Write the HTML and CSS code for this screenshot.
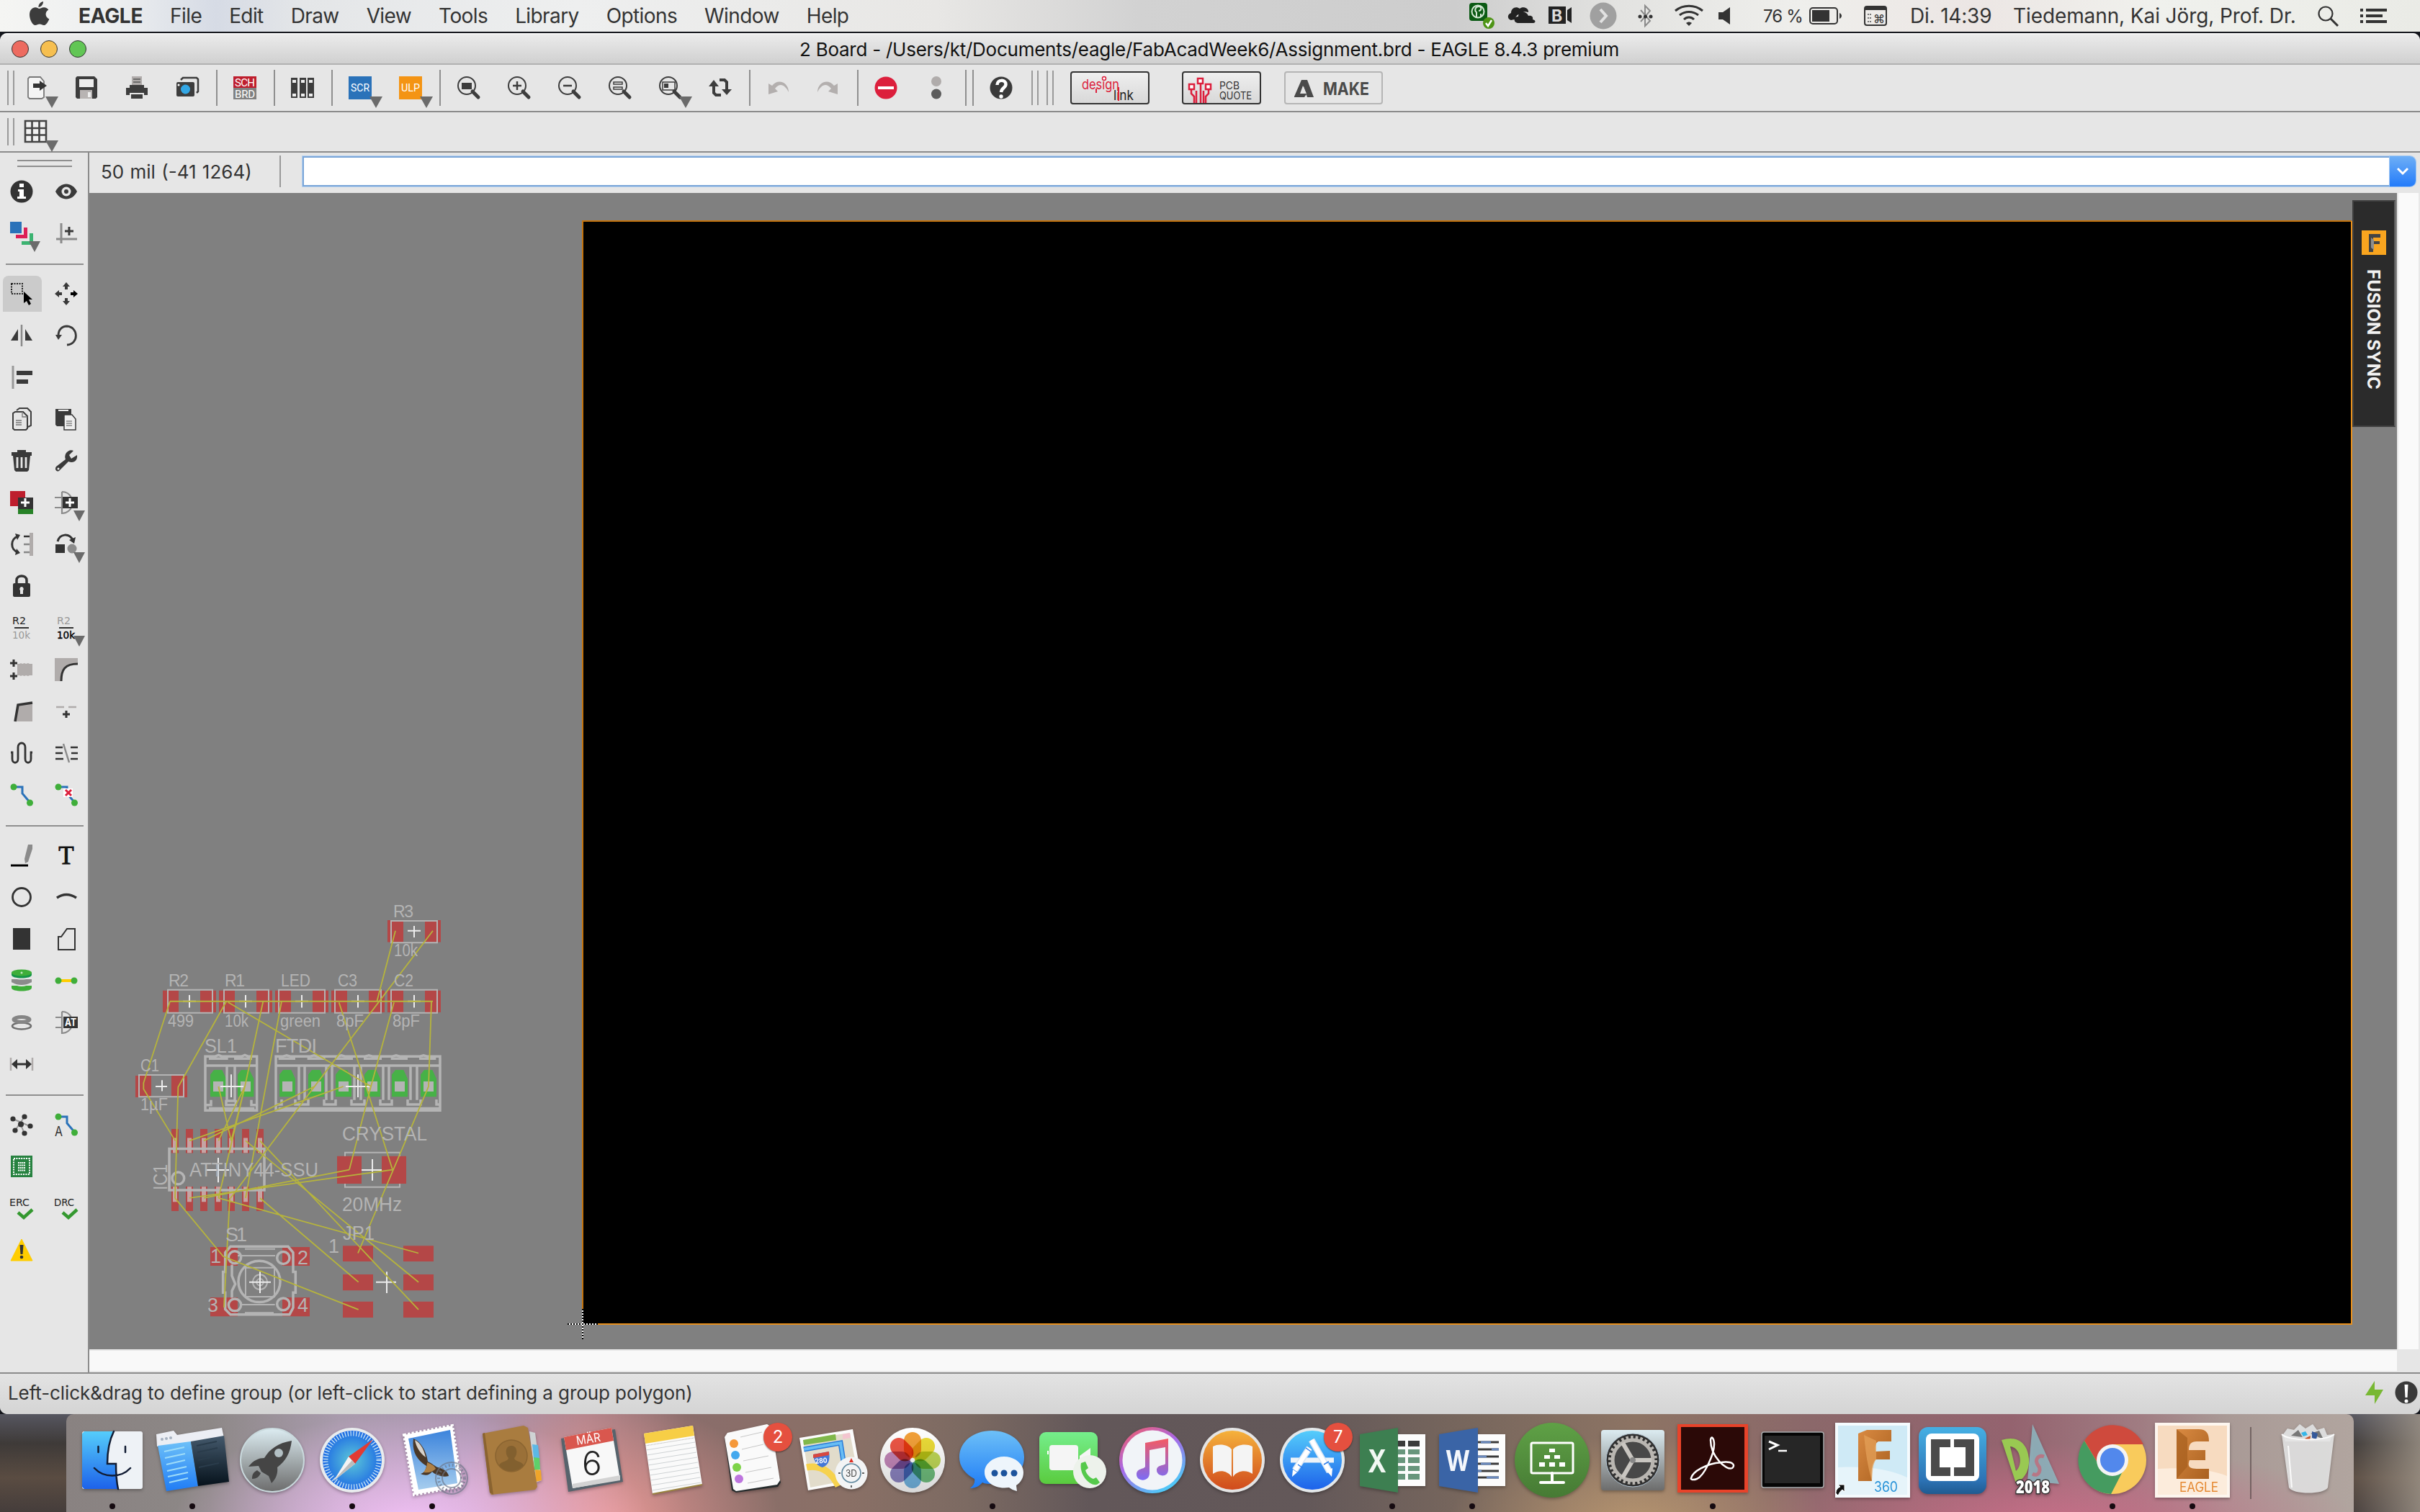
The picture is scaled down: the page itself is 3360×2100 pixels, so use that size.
FILE: index.html
```html
<!DOCTYPE html>
<html lang="de">
<head>
  <meta charset="UTF-8">
  <title>2 Board - EAGLE 8.4.3 premium</title>
  <link rel="stylesheet" href="styles.css">
</head>
<body>

  <!-- System menu bar -->
  <div class="menubar">
    <svg class="apple" width="28" height="34" viewBox="0 0 28 34"><path d="M19 0c.3 4-3 8-6.500 8C12 4.500 15 .8 19 0zM13.500 10c1.500 0 3.500-1.800 6.500-1.800 2.800 0 5 1.400 6.300 3.400-5.500 3.200-4.600 10.600 1 12.800-1.300 3.600-4.300 8.600-7.300 8.600-2.300 0-3.300-1.400-6-1.400S10 33 8 33c-3.800 0-8-8-8-14.500C0 12 4 8.300 8.200 8.300c2.200 0 4 1.700 5.300 1.700z" fill="#3c3c3c"/></svg>
    <div class="menus">
      <b>EAGLE</b><span>File</span><span>Edit</span><span>Draw</span><span>View</span><span>Tools</span><span>Library</span><span>Options</span><span>Window</span><span>Help</span>
    </div>
    <div class="extras">
      <svg width="54" height="44" viewBox="0 0 54 44"><rect x="1" y="4" width="25" height="25" rx="4" fill="#0b5a14"/><circle cx="13" cy="16" r="8.500" fill="none" stroke="#d5e8d5" stroke-width="2"/><path d="M11 24v-7c-3-2-2-8 3-8s4 6 0 6M17 24v-5" fill="none" stroke="#d5e8d5" stroke-width="2"/><circle cx="28" cy="32" r="8" fill="#4e9416"/><path d="M24 32l3 4 5-8" fill="none" stroke="#fff" stroke-width="2.500"/></svg>
      <svg width="57" height="44" viewBox="0 0 57 44"><path d="M5 28c-5-1-6-8 0-10 0-7 7-10 12-6 4-4 13-1 12 5-5-2-9 0-10 3-5-1-8 3-8 7-2 0-3 0-6 1z" fill="#222"/><path d="M14 32c-6-1-6-9 1-9 0-7 11-9 14-1 5-1 7 2 6 5 5 1 4 5 1 5z" fill="#222"/></svg>
      <svg width="57" height="44" viewBox="0 0 57 44"><path d="M0 9h24v24H0zM26 14l6-4v22l-6-4z" fill="#222"/><text x="4" y="30" class="tb" font-size="23" fill="#ddd">B</text></svg>
      <svg width="66" height="44" viewBox="0 0 66 44"><circle cx="19" cy="22" r="18.500" fill="#a0a0a0"/><path d="M15 13l8 9-8 9" fill="none" stroke="#e2e2e2" stroke-width="4"/></svg>
      <svg width="51" height="44" viewBox="0 0 51 44"><path d="M5 14l13 15-7 7V8l7 7L5 30" fill="none" stroke="#8b8b8b" stroke-width="2"/><g fill="#333"><circle cx="4" cy="23" r="2.500"/><circle cx="11.500" cy="23" r="2.500"/><circle cx="19" cy="23" r="2.500"/></g></svg>
      <svg width="62" height="44" viewBox="0 0 62 44"><g fill="none" stroke="#333" stroke-width="3"><path d="M2 15c11-9 27-9 38 0M8 21c8-6 18-6 26 0M14 27c4-4 10-4 14 0"/></g><path d="M17 32c3-2 5-2 8 0l-4 4z" fill="#333"/></svg>
      <svg width="62" height="44" viewBox="0 0 62 44"><path d="M0 17h6l10-7v24l-10-7H0z" fill="#333"/></svg>
      <span class="percent">76 %</span>
      <svg width="76" height="44" viewBox="0 0 76 44"><rect x="1" y="11" width="38" height="22" rx="4" fill="none" stroke="#333" stroke-width="2"/><path d="M4 14h24v16H4z" fill="#333"/><path d="M42 18c4 2 4 6 0 8z" fill="#333"/></svg>
      <svg width="64" height="44" viewBox="0 0 64 44"><rect x="1" y="9" width="30" height="26" rx="3" fill="none" stroke="#333" stroke-width="2"/><path d="M1 9h30v5H1z" fill="#333"/><path d="M5 20h5M5 25h5M5 30h5" stroke="#777" stroke-width="2" stroke-dasharray="2 1"/><text x="13" y="32" font-size="16" class="t" fill="#333">⌘</text></svg>
      <span class="clock">Di. 14:39</span>
      <span class="user">Tiedemann, Kai Jörg, Prof. Dr.</span>
      <svg width="59" height="44" viewBox="0 0 59 44"><circle cx="11" cy="19" r="9.500" fill="none" stroke="#333" stroke-width="2.200"/><path d="M18 26l10 10" stroke="#333" stroke-width="3"/></svg>
      <svg width="83" height="44" viewBox="0 0 83 44"><path d="M0 14h4M8 14h29M0 22h4M8 22h23M0 30h4M8 30h29" stroke="#333" stroke-width="4"/></svg>
    </div>
  </div>

  <div class="window">
    <div class="titlebar">
      <div class="lights"><i class="red"></i><i class="yellow"></i><i class="green"></i></div>
      <span class="title">2 Board - /Users/kt/Documents/eagle/FabAcadWeek6/Assignment.brd - EAGLE 8.4.3 premium</span>
    </div>

    <!-- Action toolbar -->
    <div class="toolbar main">
      <div class="handle"></div>
      <div class="btn drop"><svg class="ic" viewBox="0 0 32 32"><path d="M7 1h15l5 6v22l-3 2H7l-2-2V3z" fill="#f4f4f4" stroke="#777" stroke-width="1.800"/><path d="M12 10h9V6l10 7-10 7v-4h-9z" fill="#333"/></svg></div>
      <div class="btn"><svg class="ic" viewBox="0 0 32 32"><path d="M3 0h24l4 4v25l-2 2H3l-2-2V2z" fill="#3d3d3d"/><path d="M6 4h20v11H6z" fill="#eee"/><path d="M7 19h17v12H7z" fill="#b8b4b3"/><path d="M18 22h4v7h-4z" fill="#eee"/></svg></div>
      <div class="btn"><svg class="ic" viewBox="0 0 32 32"><path d="M9 0h14v12H9z" fill="#b0acab"/><path d="M11 4h10M11 8h10" stroke="#555" stroke-width="1.500"/><path d="M6 12h20v4h5v10h-5v-3H6v3H1V16h5z" fill="#3d3d3d"/><path d="M8 25h16v6H8z" fill="#3d3d3d"/></svg></div>
      <div class="btn"><svg class="ic" viewBox="0 0 32 32"><path d="M7 5l3-3h19l2 2v17l-2 2" fill="none" stroke="#3d3d3d" stroke-width="2.500"/><rect x="1" y="8" width="25" height="20" rx="2" fill="#3d3d3d"/><circle cx="13.500" cy="18" r="6.500" fill="#33a7e5"/><circle cx="4" cy="12" r="1.500" fill="#fff"/></svg></div>
      <div class="sep"></div>
      <div class="btn"><svg class="ic" viewBox="0 0 32 32"><path d="M0 0h32v16H0z" fill="#be1e2d"/><path d="M0 16h32v16H0z" fill="#808080"/><text x="16" y="14" class="pix" textLength="28">SCH</text><text x="16" y="30" class="pix" textLength="28">BRD</text></svg></div>
      <div class="sep"></div>
      <div class="btn"><svg class="ic" viewBox="0 0 32 32"><path d="M0 2h9v28H0zM12 2h9v28h-9zM23 2h9v28h-9z" fill="#3d3d3d"/><path d="M2 5h5v4H2zM14 5h5v4h-5zM25 5h5v4h-5zM2 24h5v4H2zM14 24h5v4h-5zM25 24h5v4h-5z" fill="#eee"/></svg></div>
      <div class="sep"></div>
      <div class="btn drop"><svg class="ic" viewBox="0 0 32 32"><path d="M0 0h32v32H0z" fill="#2a72b9"/><text x="16" y="21" class="pix" textLength="26" lengthAdjust="spacingAndGlyphs">SCR</text></svg></div>
      <div class="btn drop"><svg class="ic" viewBox="0 0 32 32"><path d="M0 0h32v32H0z" fill="#f49414"/><text x="16" y="21" class="pix" textLength="26" lengthAdjust="spacingAndGlyphs">ULP</text></svg></div>
      <div class="sep"></div>
      <div class="btn"><svg class="ic" viewBox="0 0 32 32"><circle cx="14" cy="13" r="12" class="ln"/><path d="M22 21l8 8" class="hd"/><path d="M7 9h14v9H7z" fill="#3d3d3d"/></svg></div>
      <div class="btn"><svg class="ic" viewBox="0 0 32 32"><circle cx="14" cy="13" r="12" class="ln"/><path d="M22 21l8 8" class="hd"/><path d="M8 13h12M14 7v12" stroke="#3d3d3d" stroke-width="2.500"/></svg></div>
      <div class="btn"><svg class="ic" viewBox="0 0 32 32"><circle cx="14" cy="13" r="12" class="ln"/><path d="M22 21l8 8" class="hd"/><path d="M8 13h12" stroke="#3d3d3d" stroke-width="2.500"/></svg></div>
      <div class="btn"><svg class="ic" viewBox="0 0 32 32"><circle cx="14" cy="13" r="12" class="ln"/><path d="M22 21l8 8" class="hd"/><path d="M8 8h12v3H8zM8 15h12v3H8z" fill="none" stroke="#3d3d3d" stroke-width="1.500"/></svg></div>
      <div class="btn drop"><svg class="ic" viewBox="0 0 32 32"><circle cx="14" cy="13" r="12" class="ln"/><path d="M22 21l8 8" class="hd"/><path d="M6 8h17v11H6z" fill="none" stroke="#3d3d3d" stroke-width="1.500"/><path d="M8 10h6v6H8z" fill="#3d3d3d"/></svg></div>
      <div class="btn"><svg class="ic" viewBox="0 0 32 32"><path d="M7 12v11l3 3h7M25 19V8l-3-3h-7" fill="none" stroke="#3d3d3d" stroke-width="4"/><path d="M0 14l7-9 7 9zM18 18h14l-7 8z" fill="#3d3d3d"/></svg></div>
      <div class="sep"></div>
      <div class="btn"><svg class="ic" viewBox="0 0 32 32"><path d="M31 22C31 9 17 2 8 13l-5-3v15l13-4-4-4c7-9 14-5 19 5z" fill="#b3afae"/></svg></div>
      <div class="btn"><svg class="ic" viewBox="0 0 32 32"><path d="M1 22C1 9 15 2 24 13l5-3v15l-13-4 4-4C13 8 6 12 1 22z" fill="#b3afae"/></svg></div>
      <div class="sep"></div>
      <div class="btn"><svg class="ic" viewBox="0 0 32 32"><circle cx="16" cy="16" r="15.500" fill="#dc1f3c"/><path d="M5 14h22v4H5z" fill="#fff"/></svg></div>
      <div class="btn"><svg class="ic" viewBox="0 0 32 32"><circle cx="16" cy="7" r="7" fill="#b0acab"/><circle cx="16" cy="24.500" r="7" fill="#5c5c5c"/></svg></div>
      <div class="sep"></div><div class="sep"></div>
      <div class="btn"><svg class="ic" viewBox="0 0 32 32"><circle cx="16" cy="16" r="15.500" fill="#3a3a3a"/><path d="M10.500 12c0-8 12-8 12-1 0 5-6 5-6.500 11" fill="none" stroke="#fff" stroke-width="4.500"/><circle cx="16" cy="28" r="2.700" fill="#fff"/></svg></div>
      <div class="handle four"></div><div class="handle four"></div>
      <div class="promo"><svg width="106" height="44" viewBox="0 0 106 44"><text x="14" y="23" class="t" font-size="19" fill="#dc1f3c" textLength="52" lengthAdjust="spacingAndGlyphs">design</text><text x="58" y="38" class="t" font-size="19" fill="#222" textLength="28" lengthAdjust="spacingAndGlyphs">link</text><path d="M45 5v5M34 22v6M65 20v19" stroke="#dc1f3c" stroke-width="2"/><circle cx="45" cy="8" r="2.500" fill="#fff" stroke="#dc1f3c" stroke-width="1.500"/></svg></div>
      <div class="promo pcb"><svg width="106" height="44" viewBox="0 0 106 44"><path d="M11 21v8l4 4v10M24 16v27M35 21v8l-4 4v10M18 25v18M28 25v18" fill="none" stroke="#dc1f3c" stroke-width="2.500"/><path d="M8 16h7v7H8zM20 8h7v7h-7zM31 16h7v7h-7z" fill="#fff" stroke="#dc1f3c" stroke-width="2.500"/><text x="50" y="23" class="t" font-size="14" fill="#333" textLength="28" lengthAdjust="spacingAndGlyphs">PCB</text><text x="50" y="37" class="t" font-size="14" fill="#333" textLength="45" lengthAdjust="spacingAndGlyphs">QUOTE</text></svg></div>
      <div class="promo make"><svg width="133" height="44" viewBox="0 0 133 44"><path d="M12 33L22 10h8l9 24h-9l-5-15-4 9h9l-4 6-14 0z" fill="#4a4a4a"/><path d="M24 18l5 11h-9z" fill="#e6e6e6"/><text x="52" y="31" class="tb" font-size="24" fill="#4a4a4a" textLength="64" lengthAdjust="spacingAndGlyphs">MAKE</text></svg></div>
    </div>

    <!-- Parameter toolbar -->
    <div class="toolbar params">
      <div class="handle"></div>
      <div class="btn drop"><svg class="ic" viewBox="0 0 32 32"><path d="M1 1h29v29H1zM1 11h29M1 20.500h29M10.500 1v29M20.500 1v29" fill="#f2f2f2" stroke="#444" stroke-width="2.600"/></svg></div>
    </div>

    <div class="work">
      <!-- Tool palette -->
      <div class="palette">
        <div class="grip"></div>
        <div class="tools">
          <div><svg class="ic" viewBox="0 0 32 32"><circle cx="16" cy="16" r="15.500" fill="#333"/><path d="M13 5h6v5h-6zM11 13h8v10h3v3H10v-3h3v-7h-2z" fill="#fff"/></svg></div>
          <div><svg class="ic" viewBox="0 0 32 32"><path d="M1 16C8 2 24 2 31 16 24 30 8 30 1 16z" fill="#3a3a3a"/><circle cx="16" cy="16" r="6.500" fill="#e6e6e6"/><circle cx="16" cy="16" r="3" fill="#3a3a3a"/></svg></div>
          <div class="drop"><svg class="ic" viewBox="0 0 32 32"><path d="M0 0h16v16H0z" fill="#2a72b9"/><path d="M19 8h5v15H8v-5h11z" fill="#dc1f56"/><path d="M27 16h5v16H16v-5h11z" fill="#3cb371"/></svg></div>
          <div><svg class="ic" viewBox="0 0 32 32"><path d="M9 2v28M2 24h29" stroke="#8b8b8b" stroke-width="3"/><path d="M14 13h12M20 7v12" stroke="#3a3a3a" stroke-width="3"/></svg></div>
        </div>
        <hr>
        <div class="tools">
          <div class="active"><svg class="ic" viewBox="0 0 32 32"><path d="M2 2h15v14H2z" fill="none" stroke="#222" stroke-width="2" stroke-dasharray="2 1.500"/><path d="M19 13v16l4-3 3 6 3-2-3-6h5z" fill="#000"/></svg></div>
          <div><svg class="ic" viewBox="0 0 32 32"><g fill="#3a3a3a"><path d="M16 0l5 6h-3v4h-4V6h-3zM16 32l5-6h-3v-4h-4v4h-3zM0 16l6-5v3h4v4H6v3z"/><path d="M32 16l-6-5v3h-4v4h4v3z" fill="#000"/></g></svg></div>
          <div><svg class="ic" viewBox="0 0 32 32"><path d="M11 7v16H1zM21 7v16h10z" fill="#3a3a3a"/><path d="M16 1v30" stroke="#8b8b8b" stroke-width="2.500"/></svg></div>
          <div><svg class="ic" viewBox="0 0 32 32"><path d="M5 16C5 8 10 3 17 3c16 1 17 25 0 26" fill="none" stroke="#3a3a3a" stroke-width="2.800"/><path d="M1 15h9l-5 7z" fill="#3a3a3a"/></svg></div>
          <div><svg class="ic" viewBox="0 0 32 32"><path d="M4 0v32" stroke="#999" stroke-width="3"/><path d="M9 7h22v6H9zM9 19h16v6H9z" fill="#3a3a3a"/></svg></div>
          <div></div>
          <div><svg class="ic" viewBox="0 0 32 32"><path d="M9 4l4-3h11l5 5v19l-4 2" class="ln"/><path d="M7 6h11l6 6v17l-2 2H6l-2-2V8z" class="ln"/><path d="M8 18h8M8 21h8M8 24h8M17 6v7h7" fill="none" stroke="#777" stroke-width="1.300"/></svg></div>
          <div><svg class="ic" viewBox="0 0 32 32"><path d="M1 2h22v24H3l-2-2z" fill="#3a3a3a"/><path d="M5 4h14" stroke="#eee" stroke-width="2"/><path d="M14 10h10l5 6v15H13V11z" fill="#eee" stroke="#3a3a3a" stroke-width="1.500"/><path d="M16 19h8M16 22h8M16 25h8" stroke="#888" stroke-width="1.300"/></svg></div>
          <div><svg class="ic" viewBox="0 0 32 32"><path d="M2 4h8V1h12v3h8v5h-2l-2 20-2 2H8l-2-2L4 9H2z" fill="#3a3a3a"/><path d="M10 11v15M16 11v15M22 11v15" stroke="#e6e6e6" stroke-width="2.800"/></svg></div>
          <div><svg class="ic" viewBox="0 0 32 32"><path d="M26 2l-6 6 3 5 8-5c1 8-5 12-12 9L6 30c-3 2-7-2-4-6L15 14c-3-7 4-15 11-12z" fill="#3a3a3a"/><circle cx="5" cy="27" r="1.500" fill="#eee"/></svg></div>
          <div><svg class="ic" viewBox="0 0 32 32"><path d="M0 0h21v21H0z" fill="#be1e2d"/><path d="M11 9h21v16H11z" fill="#333"/><path d="M11 25h21v7H11z" fill="#278227"/><path d="M15 16h12M21 10v12" stroke="#fff" stroke-width="3"/></svg></div>
          <div class="drop"><svg class="ic" viewBox="0 0 32 32"><path d="M0 9h10M0 23h10M10 1v30c8 0 12-6 13-8M10 1c7 0 11 4 13 8" fill="none" stroke="#8b8b8b" stroke-width="2.200"/><path d="M11 8h21v16H11z" fill="#333"/><path d="M15 16h12M21 10v12" stroke="#fff" stroke-width="3"/></svg></div>
          <div><svg class="ic" viewBox="0 0 32 32"><path d="M11 5C0 8 0 24 11 27" fill="none" stroke="#333" stroke-width="3"/><path d="M7 1l7 2-4 7zM7 31l7-3-5-6z" fill="#333"/><path d="M27 0h5v32h-5z" fill="#b0acab"/><path d="M19 5h8" stroke="#333" stroke-width="2.500"/><path d="M19 16h8M19 27h8" stroke="#888" stroke-width="2.500"/></svg></div>
          <div class="drop"><svg class="ic" viewBox="0 0 32 32"><path d="M4 12C7 1 20 0 25 10" fill="none" stroke="#333" stroke-width="3"/><path d="M20 10l9-4-2 9z" fill="#333"/><path d="M1 16h13v12H1z" fill="#333"/><circle cx="24" cy="22" r="6.500" fill="#8b8b8b"/></svg></div>
          <div><svg class="ic" viewBox="0 0 32 32"><path d="M9 14V8c0-8 14-8 14 0v6" fill="none" stroke="#333" stroke-width="3.500"/><rect x="4" y="12" width="24" height="19" rx="2" fill="#333"/><path d="M16 17a3 3 0 0 1 2 5v5h-4v-5a3 3 0 0 1 2-5z" fill="#e6e6e6"/></svg></div>
          <div></div>
          <div><svg class="ic" viewBox="0 0 32 32"><text x="3" y="11" class="nv" textLength="19" lengthAdjust="spacingAndGlyphs">R2</text><path d="M6 16h20" stroke="#333" stroke-width="2"/><text x="3" y="31" class="nv dim" textLength="25" lengthAdjust="spacingAndGlyphs">10k</text></svg></div>
          <div class="drop"><svg class="ic" viewBox="0 0 32 32"><text x="3" y="11" class="nv dim" textLength="19" lengthAdjust="spacingAndGlyphs">R2</text><path d="M6 16h20" stroke="#333" stroke-width="2"/><text x="3" y="31" class="nv dark" textLength="25" lengthAdjust="spacingAndGlyphs">10k</text></svg></div>
          <div><svg class="ic" viewBox="0 0 32 32"><path d="M0 7h10M5 2v10M0 25h10M5 20v10" stroke="#333" stroke-width="3"/><path d="M10 8h3l2-1 2 1 3-1 2 1 3-1 2 1h4v16h-4l-2 1-3-1-2 1-3-1-2 1-2-1h-3z" fill="#b0acab"/></svg></div>
          <div><svg class="ic" viewBox="0 0 32 32"><path d="M0 0h32v8C14 8 10 16 10 32H0z" fill="#b0acab"/><path d="M32 8C14 8 9 16 9 32" fill="none" stroke="#333" stroke-width="3"/></svg></div>
          <div><svg class="ic" viewBox="0 0 32 32"><path d="M7 30L11 7l20-3v26z" fill="#b0acab"/><path d="M7 30L11 7l20-3" fill="none" stroke="#333" stroke-width="3.500"/></svg></div>
          <div><svg class="ic" viewBox="0 0 32 32"><path d="M2 10h11M19 10h11" stroke="#b0acab" stroke-width="2.500"/><path d="M11 20h10M16 15v10" stroke="#333" stroke-width="3"/></svg></div>
          <div><svg class="ic" viewBox="0 0 32 32"><path d="M1 15h2v9c0 7 8 7 8 0V8c0-8 10-8 10 0v16c0 7 8 7 8 0v-9h2" fill="none" stroke="#333" stroke-width="2.800"/></svg></div>
          <div><svg class="ic" viewBox="0 0 32 32"><path d="M1 8h10M1 16h10M1 24h11M22 8h10M23 16h9M22 24h10" stroke="#333" stroke-width="2.500"/><path d="M12 3l8 26" stroke="#8b8b8b" stroke-width="2.500"/></svg></div>
          <div><svg class="ic" viewBox="0 0 32 32"><path d="M5 5h12v9l11 13" fill="none" stroke="#2a72b9" stroke-width="3"/><circle cx="5" cy="5" r="4.500" fill="#3fae3a"/><circle cx="27.500" cy="27" r="4.500" fill="#3fae3a"/></svg></div>
          <div><svg class="ic" viewBox="0 0 32 32"><path d="M5 5h12v9l11 13" fill="none" stroke="#2a72b9" stroke-width="3"/><circle cx="5" cy="5" r="4.500" fill="#3fae3a"/><circle cx="27.500" cy="27" r="4.500" fill="#3fae3a"/><path d="M12 7h13v12H12z" fill="#fff"/><path d="M15 9l8 8M23 9l-8 8" stroke="#dc1f3c" stroke-width="3"/></svg></div>
        </div>
        <hr>
        <div class="tools">
          <div><svg class="ic" viewBox="0 0 32 32"><path d="M1 30h24" stroke="#000" stroke-width="3"/><path d="M25 1h6v6l-6 18-4 2-1-6z" fill="#8b8b8b"/></svg></div>
          <div><svg class="ic" viewBox="0 0 32 32"><text x="16" y="28" class="serif">T</text></svg></div>
          <div><svg class="ic" viewBox="0 0 32 32"><circle cx="16" cy="16" r="12.500" fill="none" stroke="#333" stroke-width="2.800"/></svg></div>
          <div><svg class="ic" viewBox="0 0 32 32"><path d="M3 17q13-9 27 0" fill="none" stroke="#333" stroke-width="3.500"/></svg></div>
          <div><svg class="ic" viewBox="0 0 32 32"><path d="M4 1h24v30H4z" fill="#333"/></svg></div>
          <div><svg class="ic" viewBox="0 0 32 32"><path d="M5 31V13h4l8-11h11v29z" fill="none" stroke="#333" stroke-width="2"/></svg></div>
          <div><svg class="ic" viewBox="0 0 32 32"><path d="M2 23v3c0 6 28 6 28 0v-3z" fill="#3fae3a"/><path d="M2 14v4c0 6 28 6 28 0v-4z" fill="#8b8b8b"/><path d="M2 6v4c0 6 28 6 28 0V6z" fill="#e6e6e6"/><path d="M2 5v3c0 6 28 6 28 0V5z" fill="#149447"/><ellipse cx="16" cy="5" rx="14" ry="4.500" fill="#3fae3a"/><path d="M2 19q14 8 28 0" stroke="#e6e6e6" stroke-width="2" fill="none"/><circle cx="16" cy="5" r="1.500" fill="#bfe6bf"/></svg></div>
          <div><svg class="ic" viewBox="0 0 32 32"><path d="M5 16h22" stroke="#ffcd00" stroke-width="4"/><circle cx="5" cy="16" r="4.500" fill="#3fae3a"/><circle cx="27" cy="16" r="4.500" fill="#3fae3a"/></svg></div>
          <div><svg class="ic" viewBox="0 0 32 32"><ellipse cx="16" cy="21" rx="13" ry="4.500" fill="none" stroke="#6e6e6e" stroke-width="2.500"/><ellipse cx="16" cy="12" rx="11" ry="3.500" fill="#e6e6e6" stroke="#858585" stroke-width="5"/></svg></div>
          <div><svg class="ic" viewBox="0 0 32 32"><path d="M1 9h9M1 23h9M10 1v30c8 0 12-6 13-8M10 1c7 0 11 4 13 8" fill="none" stroke="#8b8b8b" stroke-width="2.200"/><path d="M12 8h20v16H12z" fill="#333"/><text x="14" y="21" class="tb" font-size="14" fill="#fff" textLength="16" lengthAdjust="spacingAndGlyphs">AT</text></svg></div>
          <div><svg class="ic" viewBox="0 0 32 32"><path d="M1 7v18M31 7v18" stroke="#b0acab" stroke-width="2.500"/><path d="M6 16h20" stroke="#333" stroke-width="3"/><path d="M2 16l8-7v14zM30 16l-8-7v14z" fill="#333"/></svg></div>
          <div></div>
        </div>
        <hr>
        <div class="tools">
          <div><svg class="ic" viewBox="0 0 32 32"><path d="M4 8l23 10M7 24L20 5M15 16l5 13" stroke="#999" stroke-width="2"/><g fill="#333"><circle cx="4" cy="8" r="3.600"/><circle cx="20" cy="5" r="3.600"/><circle cx="15" cy="15.500" r="4"/><circle cx="28" cy="18" r="3.600"/><circle cx="7" cy="24" r="3.600"/><circle cx="20" cy="28" r="3.600"/></g></svg></div>
          <div><svg class="ic" viewBox="0 0 32 32"><path d="M5 5h12v9l11 13" fill="none" stroke="#2a72b9" stroke-width="3"/><circle cx="5" cy="5" r="4.500" fill="#3fae3a"/><circle cx="27.500" cy="27" r="4.500" fill="#3fae3a"/><text x="0" y="32" class="t" font-size="18" fill="#333" textLength="11" lengthAdjust="spacingAndGlyphs">A</text></svg></div>
          <div><svg class="ic" viewBox="0 0 32 32"><path d="M1 1h30v30H1z" fill="#278240"/><path d="M5 5h22v22H5z" fill="none" stroke="#fff" stroke-width="2" stroke-dasharray="2 1.400"/><path d="M11 11h10M11 14.500h10M11 18h10M11 21.500h10" stroke="#fff" stroke-width="2" stroke-dasharray="2 .7"/></svg></div>
          <div></div>
          <div><svg class="ic" viewBox="0 0 32 32"><text x="-1" y="13" class="nv" textLength="28" lengthAdjust="spacingAndGlyphs">ERC</text><path d="M11 22l8 7 12-11" fill="none" stroke="#34982f" stroke-width="4.500"/></svg></div>
          <div><svg class="ic" viewBox="0 0 32 32"><text x="-1" y="13" class="nv" textLength="28" lengthAdjust="spacingAndGlyphs">DRC</text><path d="M11 22l8 7 12-11" fill="none" stroke="#34982f" stroke-width="4.500"/></svg></div>
          <div><svg class="ic" viewBox="0 0 32 32"><path d="M16 1l15 30H1z" fill="#ffcd00" stroke="#ffcd00"/><path d="M13.500 9h5l-1 13h-3z" fill="#333"/><circle cx="16" cy="26" r="2.300" fill="#333"/></svg></div>
        </div>
      </div>

      <div class="editor">
        <div class="command">
          <span class="coords">50 mil (-41 1264)</span>
          <i class="divider"></i>
          <div class="input"></div>
          <div class="combo"><svg width="16" height="12" viewBox="0 0 16 12"><path d="M1 2l7 7 7-7" fill="none" stroke="#fff" stroke-width="3"/></svg></div>
        </div>
        <div class="view">
          <svg class="board" width="3204" height="1606" viewBox="124 268 3204 1606">
            <path d="M810 308h2454v1530H810z" fill="#000"/>
            <path d="M809 1838V307H3265" fill="none" stroke="#c4730c" stroke-width="2"/>
            <path d="M809 1839H3265V307" fill="none" stroke="#e8901c" stroke-width="2"/>
            <path d="M788 1839h42M809 1818v42" stroke="#fff" stroke-width="2"/>
            <path d="M788 1839h42M809 1818v42" stroke="#000" stroke-width="2" stroke-dasharray="2 2"/>

            <g transform="translate(170 1240) scale(.33333 .38265)">
              <!-- pads -->
              <g class="pad">
                <path d="M1104 99h66v80h-66zM1260 99h66v80h-66z"/>
                <path d="M168 355h66v79h-66zM324 355h66v79h-66zM402 355h66v79h-66zM558 355h66v79h-66zM636 355h66v79h-66zM792 355h66v79h-66zM870 355h66v79h-66zM1026 355h66v79h-66zM1104 355h66v79h-66zM1260 355h66v79h-66z"/>
                <path d="M54 664h66v78H54zM204 664h66v78h-66z"/>
                <path d="M204 857h30v88h-30zM264 857h30v88h-30zM324 857h30v88h-30zM384 857h30v88h-30zM438 857h30v88h-30zM498 857h30v88h-30zM558 857h30v88h-30z"/>
                <path d="M204 1066h30v89h-30zM264 1066h30v89h-30zM324 1066h30v89h-30zM384 1066h30v89h-30zM438 1066h30v89h-30zM498 1066h30v89h-30zM558 1066h30v89h-30z"/>
                <path d="M894 956h102v100H894zM1080 956h102v100h-102z"/>
                <path d="M366 1286h114v68H366zM666 1286h114v68H666zM366 1469h114v68H366zM666 1469h114v68H666z"/>
                <path d="M918 1281h126v57H918zM1170 1281h126v57h-126zM918 1385h126v58H918zM1170 1385h126v58h-126zM918 1484h126v58H918zM1170 1484h126v58h-126z"/>
              </g>
              <!-- through holes -->
              <path class="hole" d="M366 740v-80l15-17h34l17 32v65zM480 740v-80l15-17h34l18 32v65zM654 740v-80l15-17h34l17 32v65zM774 740v-80l15-17h34l17 32v65zM888 740v-80l15-17h34l17 32v65zM1008 740v-80l15-17h34l17 32v65zM1122 740v-80l15-17h34l17 32v65zM1242 740v-80l15-17h34l17 32v65z"/>
              <path class="drill" d="M378 685h42v36h-42zM492 685h42v36h-42zM666 685h42v36h-42zM786 685h42v36h-42zM900 685h42v36h-42zM1020 685h42v36h-42zM1134 685h42v36h-42zM1254 685h42v36h-42z"/>
              <path class="drill lead" d="M210 890h18v54h-18zM270 890h18v54h-18zM330 890h18v54h-18zM390 890h18v54h-18zM444 890h18v54h-18zM504 890h18v54h-18zM564 890h18v54h-18zM210 1067h18v55h-18zM270 1067h18v55h-18zM330 1067h18v55h-18zM390 1067h18v55h-18zM444 1067h18v55h-18zM504 1067h18v55h-18zM564 1067h18v55h-18z"/>
              <!-- outlines -->
              <g class="silk thin">
                <path d="M1119 102h192v79h-192zM189 352h186v84H189zM423 352h186v84H423zM651 352h192v84H651zM885 352h192v84H885zM1119 352h192v84h-192zM69 661h186v79H69z"/>
                <path d="M927 956v-13h228v13M927 1056v12h228v-12"/>
                <path d="M513 1361h120v105H513zM510 1293h126M480 1317h156M495 1495h140M510 1524h120"/>
                <ellipse cx="573" cy="1413" rx="30" ry="27"/><ellipse cx="573" cy="1413" rx="14" ry="12"/>
              </g>
              <g class="silk">
                <path d="M345 594h40l15-5 15 5h80l15-5 15 5h35v196H345zM345 627h212M360 602h80M465 602h75M435 630v125h33V630"/>
                <path d="M345 770h24v-18M432 752v18h40v-18M537 752v18h24M360 783h190"/>
                <path d="M639 594h30l15-4 15 4h84l15-4 15 4h84l15-4 15 4h84l15-4 15 4h84l15-4 15 4h84l15-4 15 4h54v196H639zM639 627h684"/>
                <path d="M735 627v125M759 627v125M849 627v125M873 627v125M966 627v125M993 627v125M1086 627v125M1110 627v125M1200 627v125M1227 627v125M650 602h70M770 602h75M885 602h75M1005 602h75M1118 602h70M1236 602h70"/>
                <path d="M645 768h18v-18M720 750v18h54v-18M840 750v18h48v-18M954 750v18h54v-18M1074 750v18h48v-18M1188 750v18h54v-18M1308 750v18h12M650 783h670"/>
                <path d="M195 929h396v150H195z"/>
                <ellipse cx="232" cy="1036" rx="25" ry="22"/>
                <path d="M450 1284h240l21 22v70h10v75h-10v55l-15 25H450l-22-20v-60h-9v-75h9v-70z"/>
                <path d="M456 1350v40l14 30-14 25v25"/>
                <ellipse cx="570" cy="1411" rx="87" ry="75"/>
                <ellipse cx="468" cy="1323" rx="26" ry="22"/><ellipse cx="670" cy="1325" rx="26" ry="22"/><ellipse cx="468" cy="1496" rx="26" ry="22"/><ellipse cx="670" cy="1493" rx="26" ry="22"/>
              </g>
              <!-- origins -->
              <path class="origin" d="M1188 138h54M1215 120v42M252 394h54M279 371v46M486 394h54M513 371v46M720 394h54M747 371v46M954 394h54M981 371v46M1188 394h54M1215 371v46M138 703h48M165 680v40M408 703h96M453 659v83M930 703h102M981 659v83M348 1006h96M399 962v89M996 1006h84M1041 967v78M528 1413h90M573 1375v78M1056 1413h84M1101 1375v78"/>
              <!-- airwires -->
              <path class="wire" d="M198 394H1293M198 394L88 690V712L220 900M433 394L232 705 219 1108M440 397L1035 703M586 394L510 703M663 394L573 815 513 1108M902 398L1030 745 1125 1005M1060 394L1137 138M1293 138L800 703M800 703L339 900M920 703L279 900M800 703L450 1108M1131 398L1035 703 945 1005M1287 394L1275 703 981 1308M400 703L453 900M510 703L400 900M510 703L453 900M510 703L400 1108M279 1108L1125 1005M339 1108L945 1005M400 1108L1233 1308M573 1108L983 1413M219 1108L420 1320 983 1513M447 1108L423 1505M513 900L1233 1413M573 900L1233 1513"/>
            </g>

            <!-- names and values -->
            <g class="label">
              <text x="546" y="1274" textLength="28">R3</text><text x="547" y="1328" textLength="33" lengthAdjust="spacingAndGlyphs">10k</text>
              <text x="234" y="1370" textLength="28">R2</text><text x="312" y="1370" textLength="28">R1</text><text x="390" y="1370" textLength="41" lengthAdjust="spacingAndGlyphs">LED</text><text x="469" y="1370" textLength="27" lengthAdjust="spacingAndGlyphs">C3</text><text x="547" y="1370" textLength="27" lengthAdjust="spacingAndGlyphs">C2</text>
              <text x="233" y="1426" textLength="36" lengthAdjust="spacingAndGlyphs">499</text><text x="312" y="1426" textLength="33" lengthAdjust="spacingAndGlyphs">10k</text><text x="389" y="1426" textLength="56" lengthAdjust="spacingAndGlyphs">green</text><text x="467" y="1426" textLength="38" lengthAdjust="spacingAndGlyphs">8pF</text><text x="545" y="1426" textLength="38" lengthAdjust="spacingAndGlyphs">8pF</text>
              <text x="195" y="1488" textLength="26" lengthAdjust="spacingAndGlyphs">C1</text><text x="195" y="1542" textLength="38" lengthAdjust="spacingAndGlyphs">1µF</text>
              <g class="big">
                <text x="284" y="1462" textLength="45" lengthAdjust="spacingAndGlyphs">SL1</text><text x="382" y="1462" textLength="58">FTDI</text>
                <text x="475" y="1584" textLength="118" lengthAdjust="spacingAndGlyphs">CRYSTAL</text><text x="475" y="1682" textLength="83" lengthAdjust="spacingAndGlyphs">20MHz</text>
                <text x="263" y="1634" textLength="179" lengthAdjust="spacingAndGlyphs">ATTINY44-SSU</text>
                <text x="313" y="1724" textLength="30">S1</text><text x="476" y="1722" textLength="44" lengthAdjust="spacingAndGlyphs">JP1</text><text x="456" y="1740">1</text>
                <text x="292" y="1754">1</text><text x="413" y="1756">2</text><text x="288" y="1822">3</text><text x="413" y="1822">4</text>
                <text transform="translate(232 1653) rotate(-90)" textLength="36" lengthAdjust="spacingAndGlyphs">IC1</text>
              </g>
            </g>
          </svg>
          <div class="fusion">
            <svg width="34" height="34" viewBox="0 0 34 34"><path d="M0 0h34v34H0z" fill="#f9a51f"/><path d="M10 5h16v5H16v5h9v4h-9v11h-6z" fill="#444"/><path d="M13 10l4 3v14l-4-3z" fill="#8e8e8e"/></svg>
            <span>FUSION SYNC</span>
          </div>
          <div class="vscroll"></div>
        </div>
        <div class="hscroll"></div>
      </div>
    </div>

    <div class="status">
      <span>Left-click&amp;drag to define group (or left-click to start defining a group polygon)</span>
      <div class="status-icons">
        <svg width="26" height="32" viewBox="0 0 26 32"><path d="M13 0v12h12L13 32V20H0z" fill="#78b833"/></svg>
        <svg width="32" height="32" viewBox="0 0 32 32"><circle cx="16" cy="16" r="15.500" fill="#3a3a3a"/><path d="M13.500 5h5l-1 18h-3z" fill="#fff"/><circle cx="16" cy="28" r="2.500" fill="#fff"/></svg>
      </div>
    </div>
  </div>

  <!-- Dock -->
  <div class="desk">
    <svg width="0" height="0" class="defs"><defs>
      <linearGradient id="sky" x2="0" y2="1"><stop stop-color="#55cdfb"/><stop offset="1" stop-color="#1d62ea"/></linearGradient>
      <linearGradient id="msg" x2="0" y2="1"><stop stop-color="#6dc0f8"/><stop offset="1" stop-color="#1f7cf5"/></linearGradient>
      <linearGradient id="silver" x2="0" y2="1"><stop stop-color="#dcecf1"/><stop offset="1" stop-color="#6c6c6c"/></linearGradient>
      <linearGradient id="white" x2="0" y2="1"><stop stop-color="#fff"/><stop offset="1" stop-color="#d8d8d8"/></linearGradient>
      <linearGradient id="night" x2="0" y2="1"><stop stop-color="#44596c"/><stop offset="1" stop-color="#06121b"/></linearGradient>
      <linearGradient id="lime" x2="0" y2="1"><stop stop-color="#75ee8c"/><stop offset="1" stop-color="#5acb3e"/></linearGradient>
      <linearGradient id="amber" x2="0" y2="1"><stop stop-color="#f5b23c"/><stop offset="1" stop-color="#d04a1c"/></linearGradient>
      <linearGradient id="tune" x2=".6" y2="1"><stop stop-color="#fa5c5c"/><stop offset=".5" stop-color="#a868e8"/><stop offset="1" stop-color="#4fc8f8"/></linearGradient>
      <linearGradient id="note" x2="0" y2="1"><stop stop-color="#f45a62"/><stop offset="1" stop-color="#7c6cf4"/></linearGradient>
      <linearGradient id="leaf" x2="0" y2="1"><stop stop-color="#5fa146"/><stop offset="1" stop-color="#467a34"/></linearGradient>
      <linearGradient id="copper" x2="1" y2="1"><stop stop-color="#d98a42"/><stop offset="1" stop-color="#a9601f"/></linearGradient>
      <linearGradient id="brick" x2="0" y2="1"><stop stop-color="#46b0e4"/><stop offset=".8" stop-color="#2c72b4"/><stop offset="1" stop-color="#1f5a90"/></linearGradient>
      <linearGradient id="air" x2="0" y2="1"><stop stop-color="#3c84dc"/><stop offset="1" stop-color="#a6cdee"/></linearGradient>
      <radialGradient id="sea"><stop stop-color="#5cc8d8"/><stop offset="1" stop-color="#1f6ce4"/></radialGradient>
    </defs></svg>
    <div class="dock">
      <div class="app on"><svg viewBox="0 0 104 104"><rect x="10" y="12" width="84" height="80" rx="3" fill="#eef2f6"/><path d="M13 12h41c-6 12-9 28-9 45h12c0 14 1 26 3 35H13l-3-3V15z" fill="url(#sky)"/><path d="M54 12c-6 12-9 28-9 45h12c0 14 1 26 3 35M27 63c13 14 37 14 50 0M32.500 33v8M70 33v8" fill="none" stroke="#111c33" stroke-width="2.500" stroke-linecap="round"/></svg></div>
      <div class="app on"><svg viewBox="0 0 104 104"><path d="M2 16l24-5 5 6 62-10 3 14-93 12z" fill="#eceef4"/><path d="M4 32l46-6 10 62-44 7z" fill="url(#msg)"/><path d="M50 26l46-8 7 64-43 6z" fill="url(#night)"/><path d="M13 40l28-6M14 49l28-6M16 58l26-6M17 67l27-6M18 75l28-6M20 83l26-6" stroke="#9edcf8" stroke-width="2"/><path d="M58 32l28-6M59 41l28-6M60 52l28-6M61 62l28-6" stroke="#2a3c4b" stroke-width="2"/><g fill="#a5b0bf"><circle cx="10" cy="23" r="2"/><circle cx="16" cy="22" r="2"/><circle cx="22" cy="21" r="2"/></g></svg></div>
      <div class="app"><svg viewBox="0 0 104 104"><circle cx="52" cy="52" r="44" fill="url(#silver)" stroke="#c9d9dd" stroke-width="2"/><path d="M79 25c-19 3-31 12-38 24-8 0-15 3-22 12l14-1 4 8 10 6 4 10c7-7 9-15 8-22 12-9 18-20 20-37zM31 66c-6 3-7 7-7 12 6 0 10-3 12-8z" fill="#454545"/><circle cx="61" cy="42" r="6" fill="#b3c0c4"/></svg></div>
      <div class="app on"><svg viewBox="0 0 104 104"><circle cx="52" cy="52" r="45" fill="#e9ecee"/><circle cx="52" cy="52" r="41" fill="url(#sea)"/><circle cx="52" cy="52" r="37" fill="none" stroke="#d5ecf6" stroke-width="7" stroke-dasharray="1.200 2.700"/><path d="M81 23L47 47l9 10z" fill="#e23b32"/><path d="M47 47l9 10-30 24z" fill="#f3f3f3"/><path d="M56 57L26 81l26-29z" fill="#bcbcbc"/></svg></div>
      <div class="app on"><svg viewBox="0 0 104 104"><path d="M13 17L80 4l13 84-66 12z" fill="#fff" stroke="#fff" stroke-width="4" stroke-dasharray="3 2.500"/><path d="M19 22l58-12 10 74-54 9z" fill="url(#air)"/><path d="M26 22c10 4 18 17 20 32 6 2 10 7 14 8 8 2 14 6 15 12-8 2-18-1-23-6-4 5-9 6-16 3 6-2 7-6 8-11C28 50 24 37 26 22z" fill="#4a3828"/><path d="M28 24c9 5 13 15 15 24-8-6-13-14-15-24z" fill="#d8d2ca"/><path d="M45 55c5 2 10 4 12 9-4 4-9 6-17 5 3-4 5-8 5-14z" fill="#b08145"/><g fill="none" stroke="#6c7688" opacity=".65"><circle cx="79" cy="77" r="22" stroke-width="2"/><circle cx="79" cy="77" r="13" stroke-width="2"/><circle cx="79" cy="77" r="18" stroke-width="4" stroke-dasharray="2 3"/></g></svg></div>
      <div class="app"><svg viewBox="0 0 104 104"><path d="M76 12l8 2 9 66-8 3z" fill="#cfd3d4"/><path d="M80 30l8 1 2 18-8 1z" fill="#5cb8e6"/><path d="M82 48l8 1 1 16-8 1z" fill="#5fd06a"/><path d="M84 65l8 1 1 14-8 2z" fill="#f0a52a"/><path d="M11 15l57-11 6 3 13 82-3 4-61 7-2-3z" fill="#a97c3f"/><path d="M11 15l3-1 12 86-5-3z" fill="#8a6330"/><circle cx="51" cy="46" r="22" fill="#9a7038" stroke="#8a6431" stroke-width="1.500"/><path d="M51 32c9 0 9 12 4 17 0 5 10 4 13 10-9 11-26 11-34 0 3-6 13-5 13-10-5-5-5-17 4-17z" fill="#82602f"/></svg></div>
      <div class="app"><svg viewBox="0 0 104 104"><path d="M8 22l75-13 11 73-76 14z" fill="#57636c"/><path d="M12 20l66-13 12 72-66 12z" fill="#f8f8f8"/><path d="M12 20l66-13 3 18-66 13z" fill="#d9574e"/><path d="M24 85l66-12v7l-66 11z" fill="#d3d3d3"/><text transform="translate(30 31) rotate(-9)" class="t" font-size="17" fill="#fff" textLength="34" lengthAdjust="spacingAndGlyphs">MÄR</text><text x="37" y="73" class="light" font-size="46" fill="#222">6</text></svg></div>
      <div class="app"><svg viewBox="0 0 104 104"><path d="M12 15L80 4l13 82-69 13z" fill="#fafafa"/><path d="M12 15L80 4l2 14-68 11z" fill="#f7ce46"/><path d="M14 32l68-11" stroke="#aaa" stroke-width="1" stroke-dasharray="1 1"/><path d="M15 38l68-11M16 45l68-11M17 52l68-11M18 59l68-11M19 66l68-11M20 73l68-11M21 80l68-11M22 87l68-11M23 94l68-11" stroke="#cfd3d5" stroke-width="1"/><path d="M24 99l69-13" stroke="#9a8340" stroke-width="2"/></svg></div>
      <div class="app"><svg viewBox="0 0 104 104"><path d="M13 20l60-13 18 76-4 6-58 8-6-3z" fill="#252b2c"/><path d="M17 14l55-12 6 4 12 74-4 6-57 9-4-3-12-72z" fill="#fafafa"/><path d="M35 20l30-7M37 37l30-7M39 53l35-7M42 69l36-7M45 84l36-7" stroke="#c7c7c7" stroke-width="1"/><circle cx="26" cy="29" r="6" fill="#f5983a"/><circle cx="28" cy="45" r="6" fill="#43a8ee"/><circle cx="30" cy="62" r="6" fill="#7ed349"/><circle cx="33" cy="78" r="6" fill="#bd75de"/></svg><em class="badge">2</em></div>
      <div class="app"><svg viewBox="0 0 104 104"><path d="M6 21L80 9l13 72-75 13z" fill="#fbfbfb"/><path d="M11 24l65-10 12 63-67 13z" fill="#e2dccb"/><path d="M11 24l45-8 1 8-45 7z" fill="#80b84a"/><path d="M66 16l10-2 1 7-11 2z" fill="#f3c5cf"/><path d="M12 37l51-9 6 38" fill="none" stroke="#2a7cd8" stroke-width="7"/><path d="M12 37l51-9 6 38" fill="none" stroke="#68bdf4" stroke-width="4"/><path d="M16 62c20-4 34 6 44 26" fill="none" stroke="#f6d24e" stroke-width="9"/><path d="M25 44l22-4c2 12-1 19-9 22-8-2-12-9-13-18z" fill="#4377d8"/><path d="M25 44l22-4v5l-22 4z" fill="#d8473f"/><text transform="translate(28 57) rotate(-5)" class="tb" font-size="10" fill="#fff" textLength="17" lengthAdjust="spacingAndGlyphs">280</text><circle cx="78" cy="70" r="22.500" fill="#f3f4f5"/><circle cx="78" cy="70" r="13" fill="none" stroke="#60889e" stroke-width="1.700"/><path d="M78 49l3 6h-6z" fill="#dd3124"/><path d="M60 70h3M93 70h3M78 87v3" stroke="#333" stroke-width="1.500"/><text x="70" y="75" class="t" font-size="13" fill="#444" textLength="16" lengthAdjust="spacingAndGlyphs">3D</text></svg></div>
      <div class="app"><svg viewBox="0 0 104 104"><circle cx="52" cy="52" r="45" fill="url(#white)"/><g class="petals"><rect x="40" y="13" width="24" height="36" rx="12" fill="#f3a13a"/><rect x="40" y="13" width="24" height="36" rx="12" fill="#ecdc38" transform="rotate(45 52 52)"/><rect x="40" y="13" width="24" height="36" rx="12" fill="#bfd756" transform="rotate(90 52 52)"/><rect x="40" y="13" width="24" height="36" rx="12" fill="#6fbd7c" transform="rotate(135 52 52)"/><rect x="40" y="13" width="24" height="36" rx="12" fill="#72b4e0" transform="rotate(180 52 52)"/><rect x="40" y="13" width="24" height="36" rx="12" fill="#8b83c0" transform="rotate(225 52 52)"/><rect x="40" y="13" width="24" height="36" rx="12" fill="#c286b8" transform="rotate(270 52 52)"/><rect x="40" y="13" width="24" height="36" rx="12" fill="#ee5646" transform="rotate(315 52 52)"/></g></svg></div>
      <div class="app on"><svg viewBox="0 0 104 104"><path d="M51 11c25 0 45 15 45 37S76 85 51 85c-5 0-9 0-13-2-5 6-11 8-17 8 5-4 7-8 6-13C14 71 6 61 6 48c0-22 20-37 45-37z" fill="url(#msg)"/><path d="M68 47c15 0 27 10 27 22 0 8-4 14-10 18l1 8c-5-1-8-3-11-5-20 3-34-8-34-21 0-12 12-22 27-22z" fill="#eef5fb"/><g fill="#1c539c"><circle cx="55" cy="70" r="4.500"/><circle cx="68" cy="70" r="4.500"/><circle cx="82" cy="70" r="4.500"/></g></svg></div>
      <div class="app"><svg viewBox="0 0 104 104"><rect x="6" y="13" width="81" height="72" rx="9" fill="url(#lime)"/><rect x="20" y="31" width="40" height="35" rx="4" fill="#f5f5f5"/><path d="M62 46l15-11v24l-15 2z" fill="#f5f5f5"/><path d="M18 39v5" stroke="#fff" stroke-width="2"/><circle cx="76" cy="68" r="23" fill="#edf2eb"/><path d="M64 56l6-2 4 9-4 3c2 6 6 10 11 12l4-2 5 7-4 3c-12 2-25-16-22-30z" fill="#55c94b"/></svg></div>
      <div class="app"><svg viewBox="0 0 104 104"><circle cx="52" cy="52" r="46" fill="url(#tune)"/><circle cx="52" cy="52" r="41.500" fill="#f1f4f8"/><path d="M42 28l32-6v43c0 12-16 10-16 1 0-8 10-6 12-9V34l-22 4v32c0 13-18 12-18 2 0-9 10-7 12-11z" fill="url(#note)"/></svg></div>
      <div class="app"><svg viewBox="0 0 104 104"><circle cx="52" cy="52" r="45" fill="#e4e4e4"/><circle cx="52" cy="52" r="41" fill="url(#amber)"/><path d="M25 33c9-5 22-2 26 4v38c-6-9-18-10-26-4zM53 37c4-6 18-9 27-4v38c-8-6-21-5-27 4z" fill="#f4f4f4"/></svg></div>
      <div class="app"><svg viewBox="0 0 104 104"><circle cx="52" cy="52" r="45" fill="#e4e8ea"/><circle cx="52" cy="52" r="41" fill="url(#sky)"/><path d="M22 52h60" stroke="#eef3f8" stroke-width="7"/><path d="M51 24l25 44M48 35L28 66" stroke="#d9e6f4" stroke-width="9"/><path d="M51 24l25 44M48 35L28 66" stroke="#fff" stroke-width="6"/><path d="M72 67l8-4-1 12zM25 65l6 4-7 6z" fill="#fff"/><path d="M68 58l7-4M32 58l7 5M43 35l7 5" stroke="#2c7cec" stroke-width="1.500"/></svg><em class="badge">7</em></div>
      <div class="app on"><svg viewBox="0 0 104 104"><path d="M58 16h40v72H58z" fill="#fcfcfc"/><path d="M60 25h10v8H60zM74 25h16v8H74z" fill="#3b3b3b"/><path d="M60 37h10v7H60zM74 37h16v7H74zM60 48h10v8H60zM74 48h16v8H74zM60 60h10v7H60zM74 60h16v7H74zM60 71h10v8H60zM74 71h16v8H74z" fill="#68967c"/><path d="M7 16L60 7v90L7 88z" fill="#3d7f51"/><text x="18" y="69" class="tb" font-size="44" fill="#f2f8f3" textLength="26" lengthAdjust="spacingAndGlyphs">X</text></svg></div>
      <div class="app on"><svg viewBox="0 0 104 104"><path d="M58 16h40v72H58z" fill="#fcfcfc"/><path d="M60 27h29M60 37h29M60 47h29M60 57h29M60 67h29M60 76h29" stroke="#3b3b3b" stroke-width="3"/><path d="M64 27h14M79 37h10M60 47h12M64 57h14M60 67h5M72 76h17" stroke="#6a89bd" stroke-width="3"/><path d="M6 16L60 7v90L6 88z" fill="#3a64a6"/><text x="15" y="67" class="tb" font-size="40" fill="#f4f7fc" textLength="34" lengthAdjust="spacingAndGlyphs">W</text></svg></div>
      <div class="app"><svg viewBox="0 0 104 104"><circle cx="52" cy="52" r="52" fill="url(#leaf)"/><rect x="23" y="28" width="58" height="42" rx="2" fill="none" stroke="#fff" stroke-width="3"/><path d="M52 70v13M36 83h32" stroke="#fff" stroke-width="4" stroke-linecap="round"/><path d="M48 36h8v5h-8zM41 45h8v5h-8zM55 45h8v5h-8zM34 55h8v6h-8zM48 55h8v6h-8zM62 55h8v6h-8z" fill="#fff"/></svg></div>
      <div class="app"><svg viewBox="0 0 104 104"><rect x="8" y="10" width="88" height="84" rx="4" fill="url(#silver)"/><circle cx="52" cy="52" r="37" fill="#303030" stroke="#b3c3d0"/><circle cx="52" cy="52" r="28" fill="#484848" stroke="#b9b6b1" stroke-width="5"/><circle cx="52" cy="52" r="31" fill="none" stroke="#b9b6b1" stroke-width="6" stroke-dasharray="3.500 3"/><path d="M52 52h26M52 52L38 28M52 52L38 76" stroke="#c9c6c1" stroke-width="6"/><circle cx="52" cy="52" r="4" fill="#888"/></svg></div>
      <div class="app on"><svg viewBox="0 0 104 104"><path d="M3 2h98v95H3z" fill="#e8432a"/><path d="M8 6h88v87H8z" fill="#2b0907"/><path d="M22 77c2-9 20-20 42-22 16-2 20 4 15 8-8 4-30-16-30-39 1-7 5-2 5 6 0 14-14 44-24 48-5 2-9 1-8-1z" fill="none" stroke="#fff" stroke-width="2.500"/></svg></div>
      <div class="app"><svg viewBox="0 0 104 104"><rect x="9" y="13" width="86" height="77" rx="3" fill="#050505" stroke="#a8acae" stroke-width="1.500"/><path d="M13 18h77v66H13z" fill="#262626"/><path d="M19 26l12 5-12 6" fill="none" stroke="#fff" stroke-width="3"/><path d="M32 39h12" stroke="#fff" stroke-width="2.500"/></svg></div>
      <div class="app"><svg viewBox="0 0 104 104"><path d="M0 0h104v104H0z" fill="#f5fbfe"/><path d="M4 4h96v96H4z" fill="#cfeaf6"/><path d="M4 62c40-2 70 2 96 14v24H4z" fill="#e6f4fa"/><path d="M32 15l12-5h34v16H60c-4 2-5 8-4 14l20-1v12H56c-6 8-6 18-5 30H32z" fill="url(#copper)"/><path d="M40 17c2 20 4 40 11 64 1-14 1-24 6-30V25z" fill="#e6a25a" opacity=".7"/><text x="54" y="96" class="t" font-size="20" fill="#2c95d9" textLength="33" lengthAdjust="spacingAndGlyphs">360</text><path d="M1 98c0-5 3-8 6-9l-3-3h9v10l-3-3c-2 1-4 4-6 8z" fill="#111" stroke="#fff"/></svg></div>
      <div class="app"><svg viewBox="0 0 104 104"><rect x="5" y="6" width="94" height="93" rx="13" fill="url(#brick)"/><rect x="15" y="15" width="74" height="66" rx="8" fill="#fff"/><path d="M22 23h27v11H34v28h15v12H22zM82 23H54v11h16v28H54v12h28z" fill="#4a4a4a"/></svg></div>
      <div class="app"><svg viewBox="0 0 104 104"><path fill-rule="evenodd" d="M9 24c22-7 36 4 38 26 1 18-7 28-18 34zM21 33l8 34c10-8 7-33-8-34z" fill="#99c952"/><path d="M52 2l37 83-44-4z" fill="#8fb4be" opacity=".9"/><path d="M68 47c-8-3-13 4-9 11 6 7 2 18-7 13" fill="none" stroke="#b77785" stroke-width="5"/><text x="29" y="98" class="cond" font-size="24" fill="#fff" textLength="47" lengthAdjust="spacingAndGlyphs">2018</text></svg></div>
      <div class="app on"><svg viewBox="0 0 104 104"><circle cx="52" cy="52" r="47" fill="#f9cb5c"/><path d="M13 25a47 47 0 0 1 82 5H52L32 57z" fill="#cf4a3d"/><path d="M13 25a47 47 0 0 0 37 74l18-35-36-7z" fill="#459b60"/><circle cx="52" cy="52" r="22" fill="#f4f4f4"/><circle cx="52" cy="52" r="17" fill="#5288ec"/></svg></div>
      <div class="app on"><svg viewBox="0 0 104 104"><path d="M0 0h104v104H0z" fill="#fdf6ef"/><path d="M4 4h96v96H4z" fill="#f7dbc0"/><path d="M4 64c40-2 70 0 96 10v26H4z" fill="#fcecdc"/><path d="M30 9h30c12 0 15 6 15 17H58c-8 0-11 4-11 12h23v14H48c-3 8-1 12 10 12h17v14H30z" fill="url(#copper)"/><path d="M30 9l15 12v40L30 78z" fill="#a55e1e" opacity=".7"/><text x="34" y="96" class="t" font-size="18" fill="#e58a33" textLength="54" lengthAdjust="spacingAndGlyphs">EAGLE</text></svg></div>
      <i class="dock-sep"></i>
      <div class="app trash"><svg viewBox="0 0 104 104"><path d="M17 16l6-8 9 2 8-8 8 6 10-6 6 8 10-3 4 10 8-1-4 10H20z" fill="#dcdcdc"/><path d="M28 18l10-8 6 10zM55 15l12-4 6 12zM40 10l6 3" fill="#777"/><path d="M42 14l6-2 3 5-6 2z" fill="#35b6e8"/><path d="M57 12l8 3-2 8-6-2z" fill="#35599a"/><path d="M47 22l8-4-1 8z" fill="#c8552b"/><path d="M15 16c10 10 62 10 73 0l-9 74c-5 10-49 10-54 0z" fill="#e4e4e4" opacity=".9"/><path d="M15 16c10 10 62 10 73 0M24 32l5 58" stroke="#fafafa" stroke-width="2" fill="none"/></svg></div>
    </div>
  </div>

</body>
</html>
```
FILE: styles.css
```css
* {
  box-sizing: border-box;
}

body {
  margin: 0;
  width: 3360px;
  height: 2100px;
  overflow: hidden;
  background: #14161c;
  font-family: Inter, "Liberation Sans", sans-serif;
  color: #333;
}

svg {
  display: block;
  flex: none;
  overflow: visible;
}

/* Text inside drawings */
.t { font-family: Inter, sans-serif; }
.tb { font-family: Inter, sans-serif; font-weight: 700; }
.light { font-family: Inter, sans-serif; font-weight: 300; }
.cond {
  font-family: "Open Sans", sans-serif;
  font-weight: 800;
  stroke: #333;
  stroke-width: 3px;
  paint-order: stroke;
}
.pix {
  font-family: Roboto, sans-serif;
  font-size: 15px;
  fill: #fff;
  text-anchor: middle;
}
.nv {
  font-family: "DejaVu Sans", sans-serif;
  font-size: 14px;
  fill: #222;
}
.nv.dim { fill: #999; }
.nv.dark { fill: #000; stroke: #000; stroke-width: .4px; }
.serif {
  font-family: "Liberation Serif", serif;
  font-size: 35px;
  text-anchor: middle;
  fill: #111;
  stroke: #111;
  stroke-width: .9px;
}
.ln { fill: none; stroke: #3d3d3d; stroke-width: 2; }
.hd { stroke: #3d3d3d; stroke-width: 5; stroke-linecap: round; }

/* Menu bar */
.menubar {
  height: 44px;
  display: flex;
  align-items: center;
  background: linear-gradient(90deg, #f5f5f3, #edeff0 160px, #d6dbe5 300px, #e4e6e8 420px, #eeefef 800px, #e8e7e5 1300px, #d2d2d2 1580px, #cdcdcd 2020px, #e3e3e1 2250px, #efefec 2500px, #ece6e4 2740px, #f0f1ed 3000px, #eaebe6);
  font-size: 28px;
}

.apple {
  margin: -6px 0 0 41px;
}

.menus {
  display: flex;
  gap: 38px;
  margin-left: 40px;
  letter-spacing: -0.6px;
}

.menus b { letter-spacing: -0.3px; }

.extras {
  display: flex;
  align-items: center;
  margin-left: auto;
  width: 1321px;
}

.extras span { flex: none; white-space: nowrap; }
.percent { width: 64px; font-size: 24px; letter-spacing: -0.9px; }
.clock { width: 143px; letter-spacing: -0.2px; }
.user { width: 423px; letter-spacing: -0.1px; }

/* Window */
.window {
  margin-top: 2px;
  height: 1918px;
  display: flex;
  flex-direction: column;
  background: #e6e6e6;
  border-radius: 10px;
  overflow: hidden;
}

.titlebar {
  height: 44px;
  display: flex;
  align-items: center;
  background: linear-gradient(#ebebeb, #d0d0d0);
  border-top: 2px solid #f6f6f6;
  border-bottom: 2px solid #b1b1b1;
}

.lights {
  display: flex;
  gap: 16px;
  margin-left: 16px;
  width: 1094px;
}

.lights i {
  width: 24px;
  height: 24px;
  border-radius: 50%;
  border: 1px solid;
}

.red { background: #ed6b60; border-color: #d9534b; }
.yellow { background: #f6bf50; border-color: #dda03a; }
.green { background: #62c655; border-color: #51a73e; }

.title {
  font-size: 26px;
  letter-spacing: -0.25px;
  color: #111;
  white-space: nowrap;
}

.toolbar {
  display: flex;
  align-items: center;
  border-bottom: 2px solid #8b8b8b;
}

.main { height: 66px; }
.params { height: 56px; }

.handle {
  width: 10px;
  height: 48px;
  margin-left: 10px;
  margin-right: -5px;
  border-left: 2px solid #9a9a9a;
}

.handle::after {
  content: "";
  display: block;
  width: 2px;
  height: 48px;
  margin-left: 6px;
  background: #9a9a9a;
}

.params .handle,
.params .handle::after { height: 38px; }

.handle.four {
  margin: 0 10px 0 7px;
}

.handle.four + .handle.four {
  margin: 0 23px 0 1px;
}

.btn {
  width: 70px;
  height: 50px;
  display: grid;
  place-items: center;
}

.ic {
  width: 32px;
  height: 32px;
}

/* little arrow of a button that opens a menu */
.drop { position: relative; }
.drop::after {
  content: "";
  position: absolute;
  left: calc(50% + 13px);
  top: calc(50% + 12px);
  border: 9px solid transparent;
  border-top: 16px solid #6b6b6b;
  border-bottom: 0;
}

.sep {
  width: 10px;
  height: 50px;
  background: linear-gradient(90deg, transparent 5px, #8f8f8f 5px, #8f8f8f 7px, transparent 7px);
}

.promo {
  height: 46px;
  border: 2px solid #333;
  border-radius: 4px;
  background: linear-gradient(#efefef, #d8d8d8);
  margin-right: 45px;
  overflow: hidden;
}

.pcb { margin-right: 32px; }
.make { border-color: #b5b5b5; background: #e6e6e6; }

.work {
  flex: 1;
  display: flex;
  min-height: 0;
  border-bottom: 2px solid #8b8b8b;
}

/* Palette */
.palette {
  width: 124px;
  border-right: 2px solid #8b8b8b;
  padding-top: 10px;
}

.grip {
  width: 76px;
  height: 10px;
  margin: 0 0 5px 24px;
  border-top: 2px solid #8f8f8f;
  border-bottom: 2px solid #8f8f8f;
}

.tools {
  display: grid;
  grid-template-columns: 60px 64px;
  grid-auto-rows: 58px;
}

.tools > div {
  display: grid;
  place-items: center;
}

.tools .drop::after {
  left: calc(50% + 10px);
  top: calc(50% + 11px);
  border-width: 15px 8px 0;
}

.tools .active {
  width: 54px;
  height: 50px;
  margin: 4px 0 0 4px;
  padding-right: 2px;
  border-radius: 8px 8px 0 0;
  background: #cbcbcb;
}

.palette hr {
  height: 2px;
  border: 0;
  margin: 13px 6px 11px 8px;
  background: #8f8f8f;
}

/* Command line */
.editor {
  flex: 1;
  display: flex;
  flex-direction: column;
}

.command {
  height: 56px;
  display: flex;
  align-items: center;
  padding-bottom: 4px;
}

.coords {
  width: 248px;
  padding-left: 16px;
  font-size: 26px;
  word-spacing: 1px;
  white-space: nowrap;
}

.divider {
  width: 2px;
  height: 44px;
  margin: 0 30px 0 16px;
  background: #999;
}

.input {
  flex: 1;
  height: 42px;
  background: #fff;
  border: 2px solid #7ba6d8;
  border-right: 0;
  box-shadow: 0 0 0 1px #b7d2f0;
}

.combo {
  width: 36px;
  height: 42px;
  margin-right: 6px;
  display: grid;
  place-items: center;
  border-radius: 0 8px 8px 0;
  background: linear-gradient(#6eaff6, #237bfa);
  box-shadow: 0 0 0 1px #9cc4f2;
}

.view {
  flex: 1;
  display: flex;
  position: relative;
}

.board { background: #808080; }

.vscroll {
  flex: 1;
  border: solid #e8e8e8;
  border-width: 0 2px;
  background: #fafafa;
}

.hscroll {
  height: 32px;
  margin-right: 32px;
  border: solid #e8e8e8;
  border-width: 2px 0;
  background: #f9f9f9;
}

/* Board drawing */
.board path,
.board ellipse { vector-effect: non-scaling-stroke; }
.pad { fill: #b44747; }
.hole { fill: #47b147; }
.drill { fill: #b4b4b4; }
.lead { fill: #c6a3a3; }
.silk { fill: none; stroke: #b4b4b4; stroke-width: 3.5; }
.silk.thin { stroke-width: 2; }
.origin { stroke: #ececec; stroke-width: 2; }
.wire { fill: none; stroke: #b6b43c; stroke-width: 1.8; }

.label {
  font-family: "Liberation Sans", sans-serif;
  font-size: 23px;
  fill: #b4b4b4;
}

.big { font-size: 27px; }

.fusion {
  position: absolute;
  left: 3142px;
  top: 10px;
  width: 60px;
  height: 315px;
  padding-top: 40px;
  display: flex;
  flex-direction: column;
  align-items: center;
  gap: 20px;
  background: #2b2b2b;
  border: 2px solid #404040;
  border-right-color: #5e5e5e;
}

.fusion span {
  writing-mode: vertical-rl;
  font-size: 24px;
  font-weight: 700;
  line-height: 26px;
  letter-spacing: 0.1px;
  margin-right: 2px;
  color: #f2f2f2;
}

/* Status bar */
.status {
  height: 56px;
  display: flex;
  align-items: center;
  padding: 0 3px 4px 11px;
  background: linear-gradient(#e3e3e3, #d4d4d4);
  font-size: 26px;
  letter-spacing: -0.09px;
}

.status-icons {
  display: flex;
  gap: 15px;
  margin-left: auto;
}

/* Desktop strip and dock */
.desk {
  height: 136px;
  padding: 0 92px;
  background: linear-gradient(90deg, transparent 92px, transparent 3260px, rgba(160, 150, 138, .8)), linear-gradient(#565660, #3e3a38 30%, #5a4c42 65%, #453d3b);
}

.defs { position: absolute; }

.dock {
  height: 136px;
  display: flex;
  padding-left: 8.5px;
  border-radius: 10px 10px 0 0;
  background:
    radial-gradient(ellipse 330px 150px at 480px 150px, #f1c0f4, transparent),
    radial-gradient(ellipse 240px 170px at 750px 150px, rgba(238, 155, 150, .9), transparent),
    radial-gradient(ellipse 260px 120px at 2180px 150px, #b4936f, transparent),
    radial-gradient(ellipse 420px 110px at 2760px 150px, #c66f88, transparent),
    linear-gradient(90deg, #898281, #8d8887 200px, #a99bad 380px, #ad97b2 560px, #b1848c 720px, #8a6d6b 860px, #8a7066 1080px, #7c6a62 1250px, #625759 1420px, #635859 1720px, #78675d 1950px, #8d7464 2180px, #8b686a 2420px, #94636f 2700px, #a07c82 2880px, #a99a96 3000px, #b1a59f);
}

.app {
  width: 111.08px;
  flex: none;
  display: flex;
  justify-content: center;
  align-items: flex-start;
  padding-top: 12px;
  position: relative;
}

.app svg {
  width: 104px;
  height: 104px;
  filter: drop-shadow(0 2px 2px rgba(0, 0, 0, .3));
}

.app.on::after {
  content: "";
  position: absolute;
  left: calc(50% - 4px);
  top: 124px;
  width: 8px;
  height: 8px;
  border-radius: 50%;
  background: #150a10;
}

.badge {
  position: absolute;
  left: 71px;
  top: 12px;
  width: 40px;
  height: 40px;
  border-radius: 50%;
  background: #e5503f;
  box-shadow: 0 1px 2px rgba(0, 0, 0, .5);
  color: #fff;
  font-size: 24px;
  font-style: normal;
  line-height: 40px;
  text-align: center;
}

.petals rect { mix-blend-mode: multiply; }

.dock-sep {
  width: 2px;
  height: 100px;
  margin: 18px 24px 0 24px;
  background: rgba(80, 65, 65, .6);
}
```
